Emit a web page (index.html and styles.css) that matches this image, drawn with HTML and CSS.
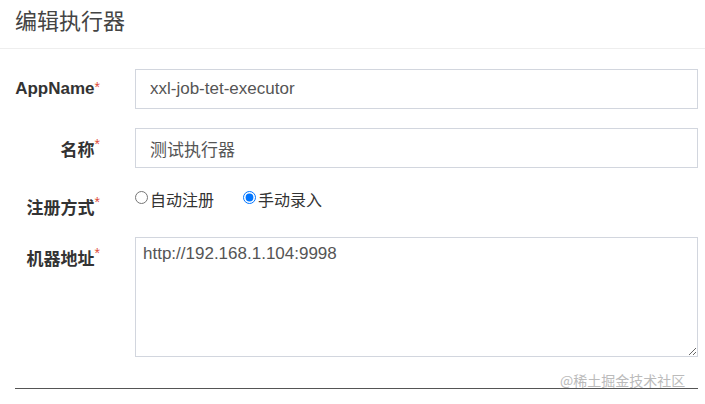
FILE: index.html
```html
<!DOCTYPE html>
<html>
<head>
<meta charset="utf-8">
<link rel="stylesheet" href="styles.css">
</head>
<body>
<div class="modal">
  <div class="header"><h4 class="title">编辑执行器</h4></div>
  <form class="form">
    <div class="row">
      <label class="label">AppName<span class="req">*</span></label>
      <div class="field"><input class="input" type="text" value="xxl-job-tet-executor"></div>
    </div>
    <div class="row">
      <label class="label">名称<span class="req">*</span></label>
      <div class="field"><input class="input" type="text" value="测试执行器"></div>
    </div>
    <div class="row row-radio">
      <label class="label">注册方式<span class="req">*</span></label>
      <div class="field radios">
        <label class="radio"><input type="radio" name="t">自动注册</label>
        <label class="radio"><input type="radio" name="t" checked>手动录入</label>
      </div>
    </div>
    <div class="row row-area">
      <label class="label">机器地址<span class="req">*</span></label>
      <div class="field"><textarea class="area">http://192.168.1.104:9998</textarea></div>
    </div>
    <div class="footer-line"></div>
  </form>
  <div class="watermark">@稀土掘金技术社区</div>
</div>
</body>
</html>
```
FILE: styles.css
```css
html, body { margin: 0; padding: 0; background: #fff; }
body {
  width: 705px; height: 404px; overflow: hidden;
  font-family: "Liberation Sans", "Noto Sans CJK SC", sans-serif;
  color: #333;
}
.modal { position: relative; height: 404px; }
.header {
  height: 49px;
  border-bottom: 1px solid #eeeeee;
  box-sizing: border-box;
  padding: 0 15px;
  display: flex; align-items: center;
}
.title {
  margin: 0 0 10px 0;
  font-size: 22px; font-weight: 400; color: #444;
  font-family: "Noto Sans CJK SC", sans-serif;
}
.form { padding: 20px 7px 0 15px; }
.row { display: flex; align-items: center; margin-bottom: 19px; }
.label {
  width: 85px; text-align: right; flex: none;
  font-weight: 700; font-size: 17px; color: #333;
  font-family: "Liberation Sans", "Noto Sans CJK SC", sans-serif;
  margin-right: 35px;
  white-space: nowrap;
}
.req { color: #dd4b39; font-size: 14px; vertical-align: top; font-weight: 400; }
.field { flex: 1; }
.input {
  box-sizing: border-box; width: 100%; height: 40px;
  border: 1px solid #d2d6de; border-radius: 0;
  padding: 0 14px;
  font-size: 17px; color: #555;
  font-family: "Liberation Sans", "Noto Sans CJK SC", sans-serif;
  outline: none;
}
.row-radio { align-items: flex-start; height: 30px; margin-top: 19px; margin-bottom: 20px; }
.row-radio .label { padding-top: 7px; }
.radios { display: flex; gap: 29px; }
.radio {
  display: flex; align-items: center;
  font-size: 16px; color: #333;
  font-family: "Noto Sans CJK SC", sans-serif;
  line-height: 24px;
}
.radio input { margin: 0 2px 4px 0; width: 13px; height: 13px; accent-color: #0075ff; }
.row-area { align-items: flex-start; }
.row-area .label { padding-top: 8px; }
.area {
  box-sizing: border-box; width: 100%; height: 120px; display: block;
  border: 1px solid #d2d6de; border-radius: 0;
  padding: 6px 7px;
  font-size: 17px; color: #555;
  font-family: "Liberation Sans", sans-serif;
  outline: none; resize: both;
}
.footer-line {
  margin-top: 31px;
  border-top: 1px solid #555;
}
.watermark {
  position: absolute; left: 560px; top: 370px;
  font-size: 14px; color: #bbb;
  font-family: "Noto Sans CJK SC", sans-serif;
}
```
